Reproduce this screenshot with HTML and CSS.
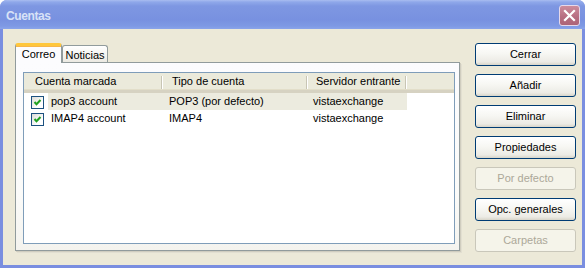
FILE: index.html
```html
<!DOCTYPE html>
<html lang="es">
<head>
<meta charset="utf-8">
<title>Cuentas</title>
<link rel="stylesheet" href="styles.css">
</head>
<body>
<div class="window">
  <div class="titlebar">
    <span class="title">Cuentas</span>
    <div class="close">
      <svg width="13" height="13" viewBox="0 0 13 13"><path d="M2 2 L11 11 M11 2 L2 11" stroke="#fff" stroke-width="2.2" stroke-linecap="square"/></svg>
    </div>
  </div>
  <div class="client">
    <div class="tabs-area">
      <div class="tabstrip">
        <div class="tab active">Correo</div>
        <div class="tab">Noticias</div>
      </div>
      <div class="panel">
        <div class="list">
          <div class="list-header">
            <div class="hcol c1">Cuenta marcada</div>
            <div class="hcol c2">Tipo de cuenta</div>
            <div class="hcol c3">Servidor entrante</div>
          </div>
          <div class="row selected">
            <div class="chkcell"><span class="chk"><svg width="11" height="11" viewBox="0 0 11 11"><path d="M2.5 5 L4.5 7.2 L8.5 3" stroke="#21a121" stroke-width="2" fill="none"/></svg></span></div>
            <div class="rowbody">
              <div class="cell c1">pop3 account</div>
              <div class="cell c2">POP3 (por defecto)</div>
              <div class="cell c3">vistaexchange</div>
            </div>
          </div>
          <div class="row">
            <div class="chkcell"><span class="chk"><svg width="11" height="11" viewBox="0 0 11 11"><path d="M2.5 5 L4.5 7.2 L8.5 3" stroke="#21a121" stroke-width="2" fill="none"/></svg></span></div>
            <div class="rowbody">
              <div class="cell c1">IMAP4 account</div>
              <div class="cell c2">IMAP4</div>
              <div class="cell c3">vistaexchange</div>
            </div>
          </div>
        </div>
      </div>
    </div>
    <div class="buttons">
      <div class="btn">Cerrar</div>
      <div class="btn">Añadir</div>
      <div class="btn">Eliminar</div>
      <div class="btn">Propiedades</div>
      <div class="btn disabled">Por defecto</div>
      <div class="btn">Opc. generales</div>
      <div class="btn disabled">Carpetas</div>
    </div>
  </div>
</div>
</body>
</html>
```
FILE: styles.css
```css
html, body {
  margin: 0;
  padding: 0;
  background: #ffffff;
}
body {
  font-family: "Liberation Sans", Arial, sans-serif;
  font-size: 11px;
  color: #000;
}
.window {
  width: 585px;
  height: 268px;
  box-sizing: border-box;
  display: flex;
  flex-direction: column;
  background: #7a8ee0;
  border-radius: 7px 7px 0 0;
  overflow: hidden;
}
.titlebar {
  height: 29px;
  flex: none;
  display: flex;
  justify-content: space-between;
  align-items: flex-start;
  padding: 0 5px 0 6px;
  background: linear-gradient(#a9bdf0 0px, #8fa8ea 2px, #7e97e2 6px, #7891e0 20px, #7e99e4 26px, #8aa4ea 29px);
}
.title {
  margin-top: 9px;
  font-family: "Liberation Sans", Arial, sans-serif;
  font-weight: bold;
  font-size: 12px;
  letter-spacing: -0.4px;
  color: #d8e2f7;
}
.close {
  margin-top: 5px;
  width: 21px;
  height: 21px;
  box-sizing: border-box;
  border: 1px solid #e6d9ea;
  border-radius: 3px;
  background: linear-gradient(#cc8c9c, #b66d80 60%, #ad6478);
  display: flex;
  align-items: center;
  justify-content: center;
}
.client {
  flex: 1;
  margin: 0 3px 3px 3px;
  background: #ece9d8;
  display: flex;
  align-items: flex-start;
  padding: 14px 0 0 12px;
}
.tabs-area {
  width: 445px;
  flex: none;
}
.tabstrip {
  display: flex;
  align-items: flex-end;
  height: 19px;
  position: relative;
  z-index: 1;
}
.tab {
  box-sizing: border-box;
  height: 17px;
  width: 46px;
  border: 1px solid #919b9c;
  border-bottom: none;
  border-radius: 3px 3px 0 0;
  background: linear-gradient(#ffffff, #f4f3ef 60%, #ebe9e2);
  text-align: center;
  line-height: 16px;
  padding-top: 1px;
}
.tab.active {
  width: 47px;
  height: 20px;
  margin-bottom: -1px;
  border-top: 3px solid #ffc73c;
  box-shadow: inset 0 1px 0 #f7b64a;
  background: #fcfcfe;
  border-radius: 3px 3px 0 0;
  line-height: 14px;
  padding-top: 1px;
  border-color: #e68b2c #919b9c #919b9c #919b9c;
  border-top-color: #ffc73c;
}
.panel {
  box-sizing: border-box;
  height: 189px;
  border: 1px solid #919b9c;
  background: linear-gradient(#fcfcfe, #fbfbf9 70%, #f4f3ee);
  padding: 9px 4px 5px 7px;
  box-shadow: 1px 1px 0 #d0cdbf, 2px 2px 0 #e2dfd1;
}
.list {
  box-sizing: border-box;
  width: 432px;
  height: 172px;
  border: 1px solid #7f9db9;
  background: #ffffff;
}
.list-header {
  display: flex;
  height: 17px;
  background: #ebeadb;
  border-bottom: 3px solid #d6d2c2;
  box-shadow: inset 0 -1px 0 #e2dec9;
  line-height: 17px;
  color: #000;
}
.hcol {
  box-sizing: border-box;
  position: relative;
  padding-left: 10px;
}
.hcol::after {
  content: "";
  position: absolute;
  right: 0;
  top: 3px;
  height: 13px;
  width: 1px;
  background: #c8c5b4;
  box-shadow: 1px 0 0 #ffffff;
}
.hcol.c1 { width: 138px; padding-left: 11px; }
.hcol.c2 { width: 145px; }
.hcol.c3 { width: 99px; padding-left: 9px; }
.row {
  display: flex;
  height: 17px;
  line-height: 17px;
}
.chkcell {
  width: 24px;
  flex: none;
  box-sizing: border-box;
  padding: 3px 0 0 7px;
}
.chk {
  display: block;
  width: 13px;
  height: 13px;
  box-sizing: border-box;
  border: 1px solid #1c5180;
  background: linear-gradient(135deg, #dcdcd7, #ffffff 70%);
}
.chk svg { display: block; }
.rowbody {
  display: flex;
  width: 359px;
}
.row.selected .rowbody {
  background: #ecebdf;
}
.cell {
  box-sizing: border-box;
  white-space: nowrap;
  overflow: hidden;
}
.cell.c1 { width: 114px; padding-left: 3px; }
.cell.c2 { width: 145px; padding-left: 7px; }
.cell.c3 { width: 100px; padding-left: 6px; }
.buttons {
  margin-left: 15px;
  display: flex;
  flex-direction: column;
  gap: 8px;
}
.btn {
  box-sizing: border-box;
  width: 101px;
  height: 23px;
  border: 1px solid #003c74;
  border-radius: 3px;
  background: linear-gradient(#ffffff, #f7f7f3 45%, #ecebe5 85%, #d8d5c9);
  text-align: center;
  line-height: 21px;
  color: #000;
}
.btn.disabled {
  border-color: #c9c7ba;
  background: #f5f4ea;
  color: #aca899;
}
```
